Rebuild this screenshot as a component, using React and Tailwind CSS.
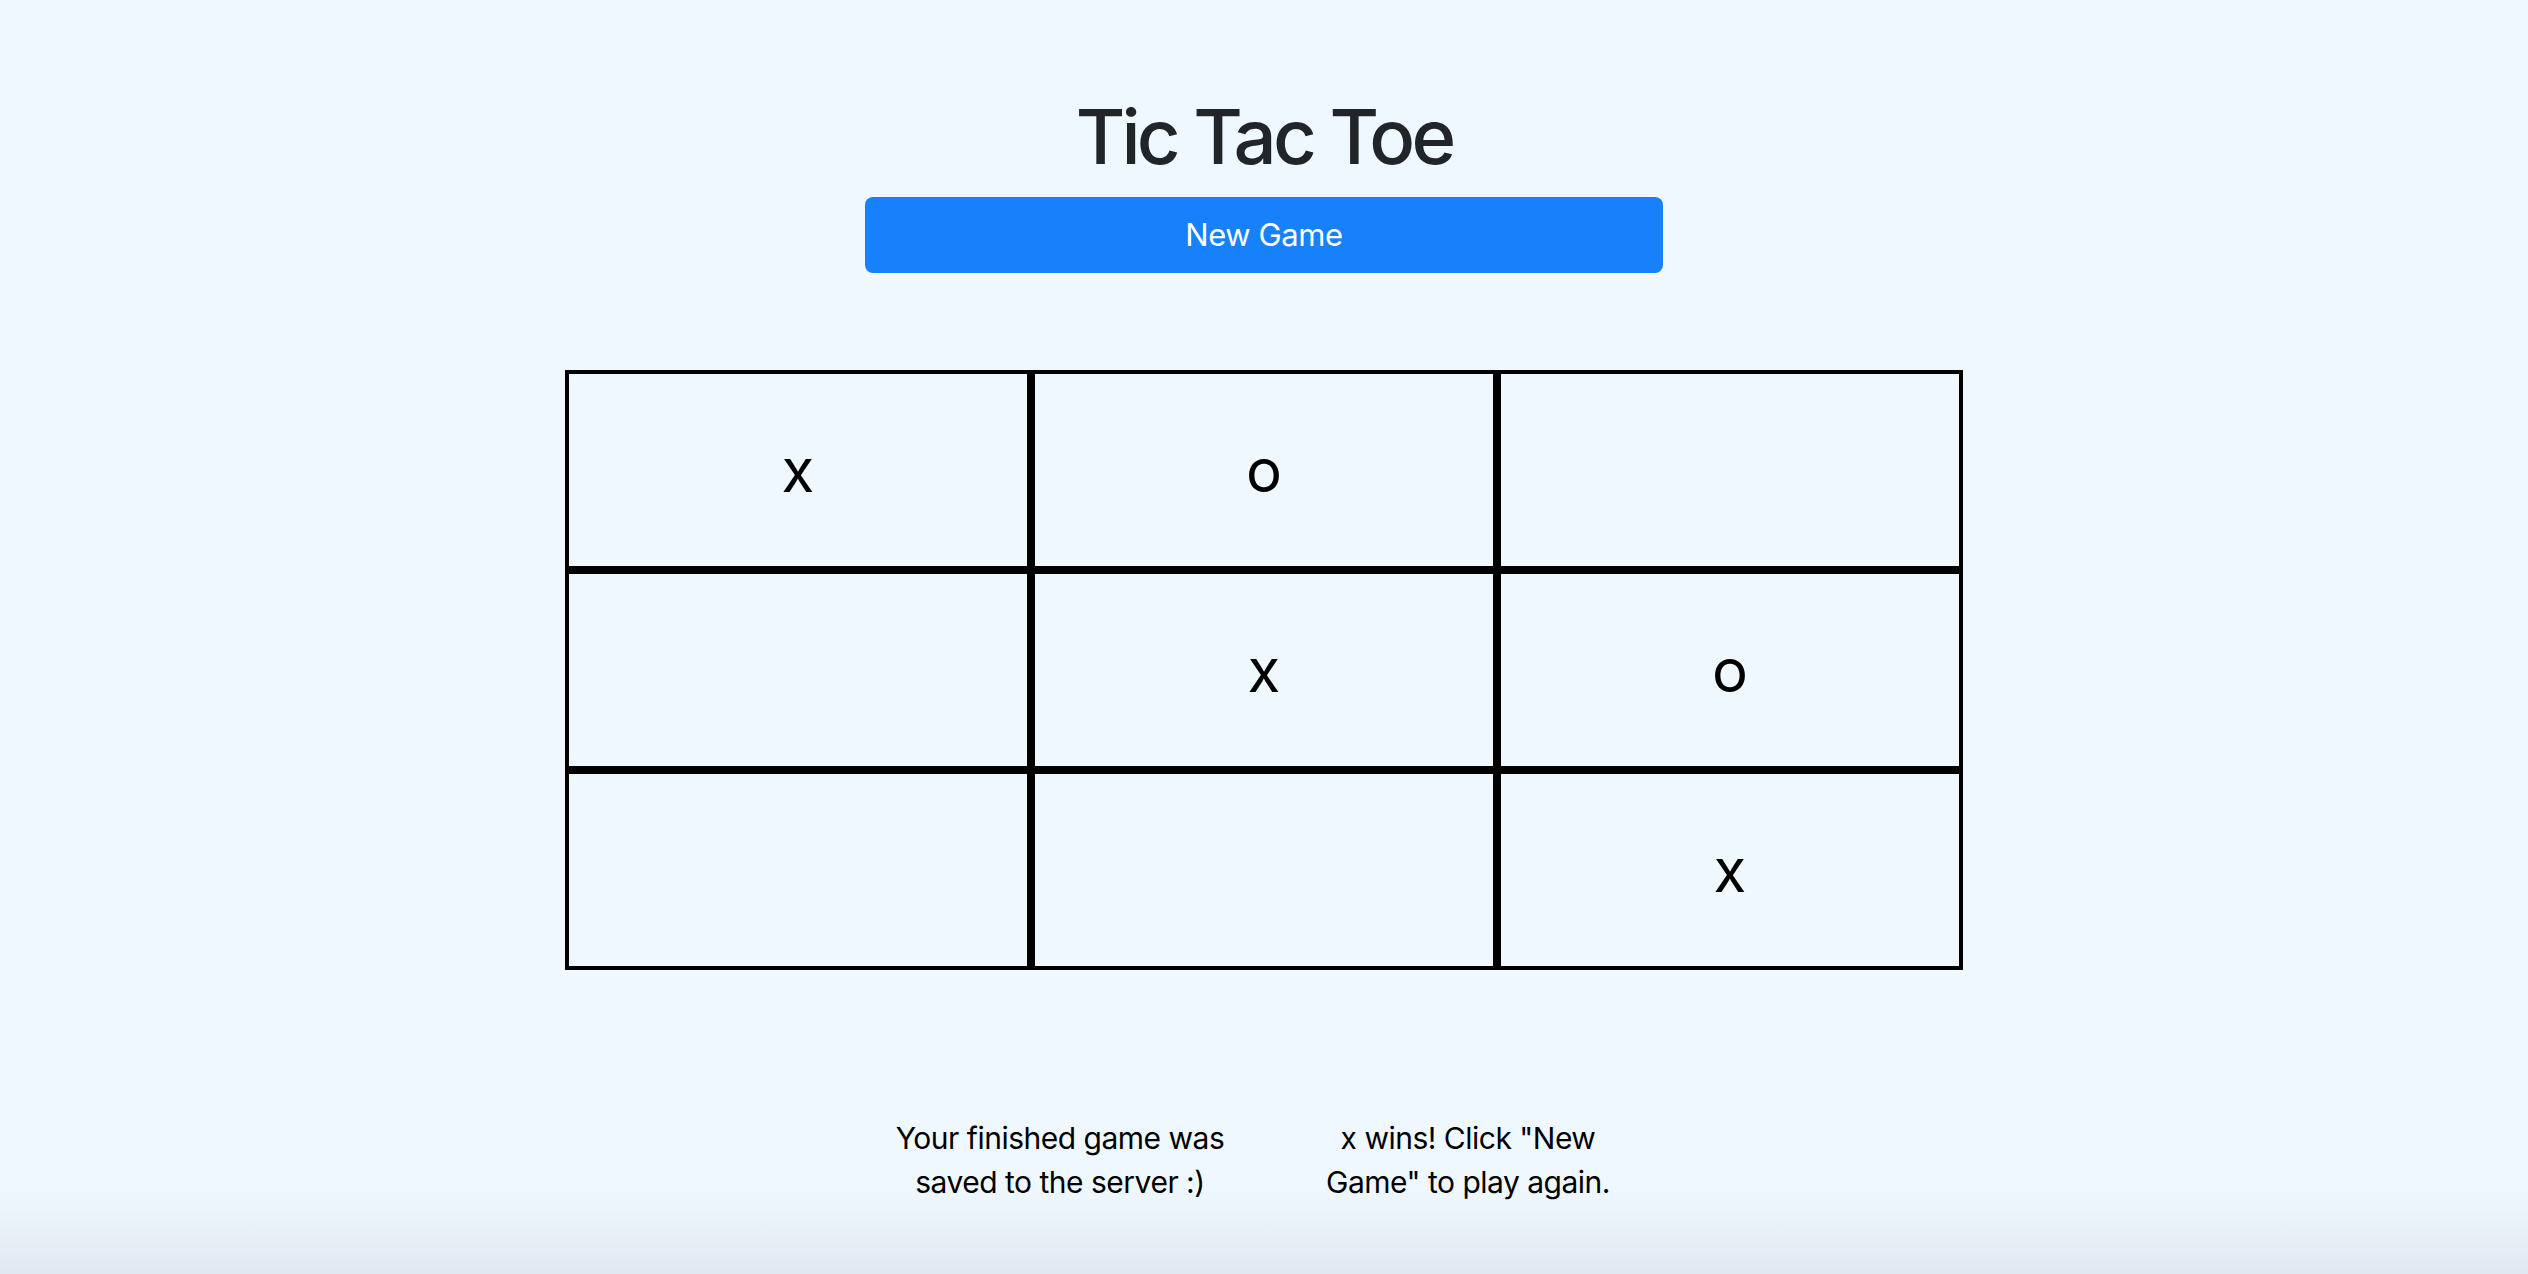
import React from 'react'

const board = ['x', 'o', '', '', 'x', 'o', '', '', 'x'];

function Cell({ value }) {
    return (
        <div className="w-[466px] h-[200px] border-4 border-black flex items-center justify-center text-[60px] text-black">
            {value}
        </div>
    )
}

export default function App() {
    return (
        <div className="min-h-screen w-full bg-[linear-gradient(to_bottom,#f0f8ff_0%,#f0f8ff_93%,#e1e8f1_100%)] font-['Inter','Liberation_Sans',sans-serif] flex flex-col items-center">
            <h1 className="mt-[88px] text-[76px] leading-[96px] font-medium text-[#212529] tracking-[-3.8px]">Tic Tac Toe</h1>
            <button className="mt-[13px] w-[798px] h-[76px] rounded-lg bg-[#1780fb] text-white text-[31px] leading-[48px] tracking-[-0.4px]">
                New Game
            </button>

            <div className="mt-[97px] grid grid-cols-3">
                {board.map((v, i) => <Cell key={i} value={v} />)}
            </div>

            <div className="mt-[146px] flex gap-[68px] text-[30px] leading-[44px] text-black text-center tracking-[-0.5px]">
                <p className="w-[340px]">Your finished game was saved to the server :)</p>
                <p className="w-[340px]">x wins! Click "New Game" to play again.</p>
            </div>
        </div>
    )
}
